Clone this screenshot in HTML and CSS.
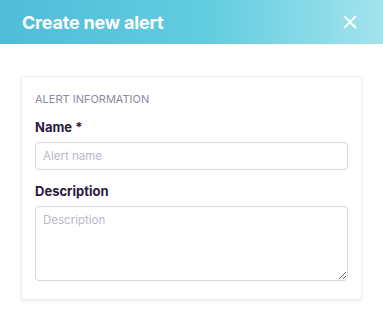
FILE: index.html
```html
<!DOCTYPE html>
<html lang="en">
<head>
    <meta charset="UTF-8">
    <meta name="viewport" content="width=device-width, initial-scale=1.0">
    <title>Create new alert</title>
    <link rel="stylesheet" href="styles.css">
</head>
<body>
    <div class="modal-header">
        <h1>Create new alert</h1>
        <button class="close-btn" aria-label="Close">
            <svg width="14" height="14" viewBox="0 0 14 14">
                <path d="M1.5 1.5 L12.5 12.5 M12.5 1.5 L1.5 12.5" stroke="#fff" stroke-width="1.8" stroke-linecap="round"/>
            </svg>
        </button>
    </div>

    <div class="modal-body">
        <div class="card">
            <h2>Alert information</h2>
            <div class="form-group">
                <label for="alertName">Name *</label>
                <input type="text" id="alertName" placeholder="Alert name">
            </div>
            <div class="form-group">
                <label for="alertDesc">Description</label>
                <textarea id="alertDesc" placeholder="Description"></textarea>
            </div>
        </div>
    </div>
</body>
</html>
```

FILE: styles.css
```css
body {
    font-family: Inter, "Noto Sans", sans-serif;
    margin: 0;
    background-color: #fff;
    width: 383px;
}
.modal-header {
    height: 44px;
    display: flex;
    align-items: center;
    justify-content: space-between;
    padding: 0 22px;
    background: linear-gradient(90deg, #4fbcd9 0%, #63cde0 55%, #a3e3ed 100%);
}
.modal-header h1 {
    margin: 0;
    color: #fff;
    font-size: 18px;
    font-weight: 700;
    letter-spacing: -0.2px;
}
.close-btn {
    background: none;
    border: none;
    padding: 0;
    margin-right: 4px;
    width: 14px;
    height: 14px;
    cursor: pointer;
    display: flex;
}
.modal-body {
    padding: 32px 21px 20px 21px;
}
.card {
    border: 1px solid #efeef3;
    box-shadow: 0 1px 3px rgba(40, 30, 80, 0.08);
    background-color: #fff;
    padding: 15px 13px 18px 13px;
}
.card h2 {
    margin: 0 0 13px 0;
    font-size: 11px;
    font-weight: 400;
    text-transform: uppercase;
    color: #8d89a6;
    letter-spacing: 0;
}
.form-group {
    margin-bottom: 13px;
}
.form-group:last-child {
    margin-bottom: 0;
}
label {
    display: block;
    font-size: 13px;
    font-weight: 700;
    color: #2b1b40;
    margin-bottom: 7px;
}
input, textarea {
    display: block;
    box-sizing: border-box;
    width: 100%;
    border: 1px solid #d8d5e2;
    border-radius: 4px;
    padding: 6px 7px;
    font-family: Inter, "Noto Sans", sans-serif;
    font-size: 11.5px;
    color: #2b1b40;
    margin: 0;
}
input {
    height: 28px;
}
textarea {
    height: 75px;
    resize: vertical;
}
input::placeholder, textarea::placeholder {
    color: #bbb7cc;
}
```
